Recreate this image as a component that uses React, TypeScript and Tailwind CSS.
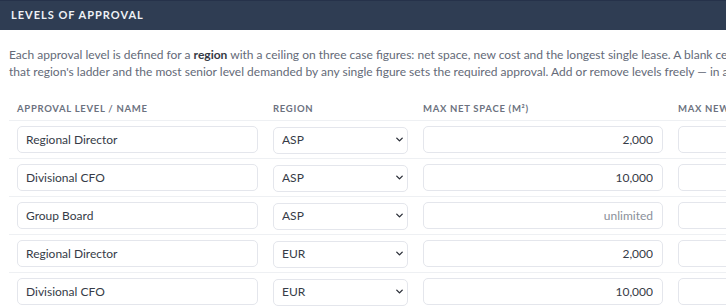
import { ChevronDown } from "lucide-react";

type Level = { name: string; region: string; space: string; cost: string; lease: string };

const levels: Level[] = [
  { name: "Regional Director", region: "ASP", space: "2,000", cost: "500,000", lease: "5" },
  { name: "Divisional CFO", region: "ASP", space: "10,000", cost: "2,500,000", lease: "10" },
  { name: "Group Board", region: "ASP", space: "", cost: "", lease: "" },
  { name: "Regional Director", region: "EUR", space: "2,000", cost: "500,000", lease: "5" },
  { name: "Divisional CFO", region: "EUR", space: "10,000", cost: "2,500,000", lease: "10" },
];

const font = { fontFamily: "Lato, 'Liberation Sans', sans-serif" };

function Field({ value, right }: { value: string; right?: boolean }) {
  return (
    <input
      readOnly
      value={value}
      placeholder="unlimited"
      className={`h-[27px] w-full rounded-[5px] border border-[#e4e6ec] bg-white px-[8px] text-[12px] text-[#363b47] placeholder:text-[#8a8f9a] outline-none ${
        right ? "text-right pr-[9px]" : ""
      }`}
    />
  );
}

function RegionSelect({ value }: { value: string }) {
  return (
    <div className="relative h-[27px] w-full">
      <select
        value={value}
        onChange={() => {}}
        className="h-full w-full appearance-none rounded-[5px] border border-[#e4e6ec] bg-white pl-[8px] text-[12px] text-[#363b47] outline-none"
      >
        <option>ASP</option>
        <option>EUR</option>
        <option>AMR</option>
      </select>
      <ChevronDown
        size={11}
        strokeWidth={3}
        className="pointer-events-none absolute right-[3px] top-[8px] text-[#2b2f38]"
      />
    </div>
  );
}

export default function App() {
  return (
    <div className="w-[726px] h-[308px] overflow-hidden bg-white" style={font}>
      <div className="w-[1200px]">
        <div className="h-[30px] bg-[#2f3d53] flex items-center px-[11px] border-t border-[#26324a]">
          <h2 className="text-[11px] font-bold tracking-[1px] text-[#eef1f6]">LEVELS OF APPROVAL</h2>
        </div>

        <p className="px-[9px] pt-[16px] text-[12px] leading-[17px] text-[#646a78]">
          Each approval level is defined for a <b className="text-[#353a45]">region</b> with a ceiling on three case figures: net
          space, new cost and the longest single lease. A blank ceiling means no limit. Levels are ranked within
          <br />
          that region's ladder and the most senior level demanded by any single figure sets the required approval. Add or
          remove levels freely — in any region, in any order.
        </p>

        <table className="mt-[22px] ml-[9px] border-collapse">
          <thead>
            <tr className="border-b border-[#eef0f3]">
              {[
                ["APPROVAL LEVEL / NAME", "w-[256px]"],
                ["REGION", "w-[150px]"],
                ["MAX NET SPACE (M²)", "w-[255px]"],
                ["MAX NEW COST", "w-[255px]"],
                ["MAX LEASE (YEARS)", "w-[200px]"],
              ].map(([label, w]) => (
                <th
                  key={label}
                  className={`${w} pl-[8px] pr-[7px] pb-[4px] text-left text-[9.5px] font-bold tracking-[0.7px] text-[#6c7280]`}
                >
                  {label}
                </th>
              ))}
            </tr>
          </thead>
          <tbody>
            {levels.map((l, i) => (
              <tr key={i} className="border-b border-[#eef0f3]">
                <td className="pl-[8px] pr-[7px] py-[5px]">
                  <Field value={l.name} />
                </td>
                <td className="pl-[8px] pr-[7px] py-[5px]">
                  <RegionSelect value={l.region} />
                </td>
                <td className="pl-[8px] pr-[7px] py-[5px]">
                  <Field value={l.space} right />
                </td>
                <td className="pl-[8px] pr-[7px] py-[5px]">
                  <Field value={l.cost} right />
                </td>
                <td className="pl-[8px] pr-[7px] py-[5px]">
                  <Field value={l.lease} right />
                </td>
              </tr>
            ))}
          </tbody>
        </table>
      </div>
    </div>
  );
}
